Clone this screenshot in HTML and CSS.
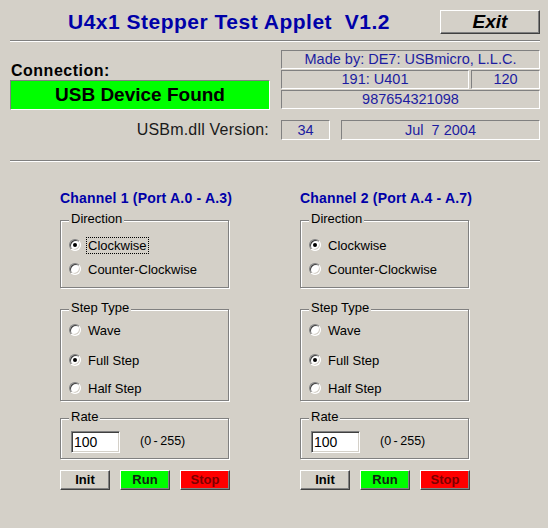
FILE: index.html
```html
<!DOCTYPE html>
<html lang="en">
<head>
<meta charset="utf-8">
<title>U4x1 Stepper Test Applet</title>
<link rel="stylesheet" href="styles.css">
</head>
<body>
<div class="app">
  <header class="top">
    <h1 class="title">U4x1 Stepper Test Applet  V1.2</h1>
    <button class="btn exit">Exit</button>
  </header>
  <hr class="sep">
  <section class="conn">
    <div class="conn-left">
      <div class="conn-label">Connection:</div>
      <div class="status">USB Device Found</div>
    </div>
    <div class="info">
      <div class="field">Made by: DE7: USBmicro, L.L.C.</div>
      <div class="info-row">
        <div class="field grow">191: U401</div>
        <div class="field num">120</div>
      </div>
      <div class="field">987654321098</div>
    </div>
  </section>
  <section class="dll">
    <div class="dll-label">USBm.dll Version:</div>
    <div class="dll-fields">
      <div class="field ver">34</div>
      <div class="field date">Jul  7 2004</div>
    </div>
  </section>
  <hr class="sep sep2">
  <section class="channels">
    <div class="channel">
      <h2 class="ch-title">Channel 1 (Port A.0 - A.3)</h2>
      <div class="group dir">
        <span class="legend">Direction</span>
        <div class="opt"><span class="radio on"></span><span class="txt focus">Clockwise</span></div>
        <div class="opt"><span class="radio"></span><span class="txt">Counter-Clockwise</span></div>
      </div>
      <div class="group step">
        <span class="legend">Step Type</span>
        <div class="opt"><span class="radio"></span><span class="txt">Wave</span></div>
        <div class="opt o2"><span class="radio on"></span><span class="txt">Full Step</span></div>
        <div class="opt o3"><span class="radio"></span><span class="txt">Half Step</span></div>
      </div>
      <div class="group rate">
        <span class="legend">Rate</span>
        <input class="entry" type="text" value="100">
        <span class="range">(0 - 255)</span>
      </div>
      <div class="actions">
        <button class="btn act init">Init</button>
        <button class="btn act run">Run</button>
        <button class="btn act stop">Stop</button>
      </div>
    </div>
    <div class="channel">
      <h2 class="ch-title">Channel 2 (Port A.4 - A.7)</h2>
      <div class="group dir">
        <span class="legend">Direction</span>
        <div class="opt"><span class="radio on"></span><span class="txt">Clockwise</span></div>
        <div class="opt"><span class="radio"></span><span class="txt">Counter-Clockwise</span></div>
      </div>
      <div class="group step">
        <span class="legend">Step Type</span>
        <div class="opt"><span class="radio"></span><span class="txt">Wave</span></div>
        <div class="opt o2"><span class="radio on"></span><span class="txt">Full Step</span></div>
        <div class="opt o3"><span class="radio"></span><span class="txt">Half Step</span></div>
      </div>
      <div class="group rate">
        <span class="legend">Rate</span>
        <input class="entry" type="text" value="100">
        <span class="range">(0 - 255)</span>
      </div>
      <div class="actions">
        <button class="btn act init">Init</button>
        <button class="btn act run">Run</button>
        <button class="btn act stop">Stop</button>
      </div>
    </div>
  </section>
</div>
</body>
</html>
```
FILE: styles.css
```css
* { box-sizing: border-box; }
html, body {
  margin: 0;
  padding: 0;
  background: #d4d0c8;
}
body {
  width: 548px;
  height: 528px;
  overflow: hidden;
  font-family: "Liberation Sans", Arial, sans-serif;
  color: #000;
}
.app {
  padding: 10px 8px 0 10px;
}
.top {
  display: flex;
  align-items: center;
  height: 24px;
}
.title {
  margin: 0 0 0 58px;
  font-size: 21px;
  font-weight: bold;
  letter-spacing: 0.5px;
  color: #0000a8;
  white-space: pre;
  line-height: 24px;
}
.btn {
  font-family: "Liberation Sans", Arial, sans-serif;
  border: 1px solid;
  border-color: #fff #404040 #404040 #fff;
  box-shadow: inset -1px -1px 0 #808080;
  background: #d4d0c8;
  padding: 0;
  margin: 0;
  color: #000;
}
.exit {
  margin-left: auto;
  width: 100px;
  height: 24px;
  font-size: 19px;
  font-weight: bold;
  font-style: italic;
  line-height: 20px;
}
.sep {
  margin: 6px 0 0;
  height: 0;
  border: 0;
  border-top: 1px solid #808080;
  border-bottom: 1px solid #fff;
}
.sep2 { margin-top: 20px; }

.conn {
  display: grid;
  grid-template-columns: 260px 259px;
  column-gap: 11px;
  padding-top: 8px;
}
.conn-left { padding-top: 12px; }
.conn-label {
  font-size: 16px;
  font-weight: bold;
  letter-spacing: 0.5px;
  line-height: 17px;
  margin-bottom: 1px;
  padding-left: 1px;
}
.status {
  height: 30px;
  background: #00ff00;
  border: 1px solid;
  border-color: #808080 #fff #fff #808080;
  font-size: 19px;
  font-weight: bold;
  line-height: 27px;
  text-align: center;
}
.info {
  display: flex;
  flex-direction: column;
  gap: 1px;
}
.info-row {
  display: flex;
  gap: 2px;
}
.field {
  height: 19px;
  border: 1px solid;
  border-color: #808080 #fff #fff #808080;
  color: #1c1ca0;
  font-size: 14.5px;
  line-height: 17px;
  text-align: center;
  white-space: pre;
}
.grow { flex: 1; }
.num { width: 69px; }

.dll {
  display: grid;
  grid-template-columns: 260px 259px;
  column-gap: 11px;
  margin-top: 10px;
}
.dll-label {
  text-align: right;
  font-size: 16px;
  letter-spacing: 0.2px;
  line-height: 20px;
  color: #1a1a1a;
  padding-right: 1px;
}
.dll-fields {
  display: flex;
  gap: 11px;
}
.dll-fields .field {
  height: 20px;
  line-height: 18px;
}
.ver { width: 49px; }
.date { flex: 1; }

.channels {
  display: flex;
  gap: 70px;
  padding: 28px 0 0 50px;
}
.channel {
  width: 170px;
}
.ch-title {
  margin: 0;
  font-size: 14px;
  font-weight: bold;
  letter-spacing: 0.2px;
  line-height: 16px;
  color: #0000a8;
  white-space: nowrap;
}
.group {
  position: relative;
  width: 169px;
  border: 1px solid #808080;
  box-shadow: inset 1px 1px 0 #fff, 1px 1px 0 #fff;
  font-size: 13px;
}
.legend {
  position: absolute;
  top: -10px;
  left: 8px;
  padding: 0 2px;
  background: #d4d0c8;
  line-height: 15px;
}
.dir {
  margin-top: 14px;
  padding: 12px 0 6px 8px;
}
.step {
  margin-top: 21px;
  padding: 8px 0 0 8px;
}
.opt {
  display: flex;
  align-items: center;
  height: 24px;
}
.o2 { margin-top: 6px; }
.o3 { margin-top: 4px; }
.radio {
  position: relative;
  width: 12px;
  height: 12px;
  border-radius: 50%;
  background: #fff;
  border: 1px solid;
  border-color: #808080 #fff #fff #808080;
  box-shadow: inset 1px 1px 0 #404040, inset -1px -1px 0 #d4d0c8;
  flex: none;
}
.radio.on::after {
  content: "";
  position: absolute;
  left: 3px;
  top: 3px;
  width: 4px;
  height: 4px;
  border-radius: 50%;
  background: #000;
}
.txt {
  margin-left: 5px;
  padding: 1px;
  border: 1px dotted transparent;
  line-height: 13px;
}
.txt.focus { border-color: #000; }

.rate {
  margin-top: 17px;
  padding: 12px 0 5px 10px;
  display: flex;
  align-items: center;
}
.entry {
  width: 49px;
  height: 22px;
  margin: 0;
  padding: 0 0 0 2px;
  background: #fff;
  border: 1px solid;
  border-color: #808080 #fff #fff #808080;
  box-shadow: inset 1px 1px 0 #404040, inset -1px -1px 0 #d4d0c8;
  font-family: "Liberation Sans", Arial, sans-serif;
  font-size: 14px;
  color: #000;
  outline: none;
}
.range {
  margin-left: 20px;
  font-size: 12.5px;
  word-spacing: -1px;
  padding-bottom: 2px;
}
.actions {
  display: flex;
  justify-content: space-between;
  margin-top: 11px;
}
.act {
  width: 50px;
  height: 20px;
  font-size: 13px;
  font-weight: bold;
  line-height: 16px;
}
.init { background: #d4d0c8; }
.run { background: #00ff00; color: #102010; }
.stop { background: #ff0000; color: #7a0000; }
```
